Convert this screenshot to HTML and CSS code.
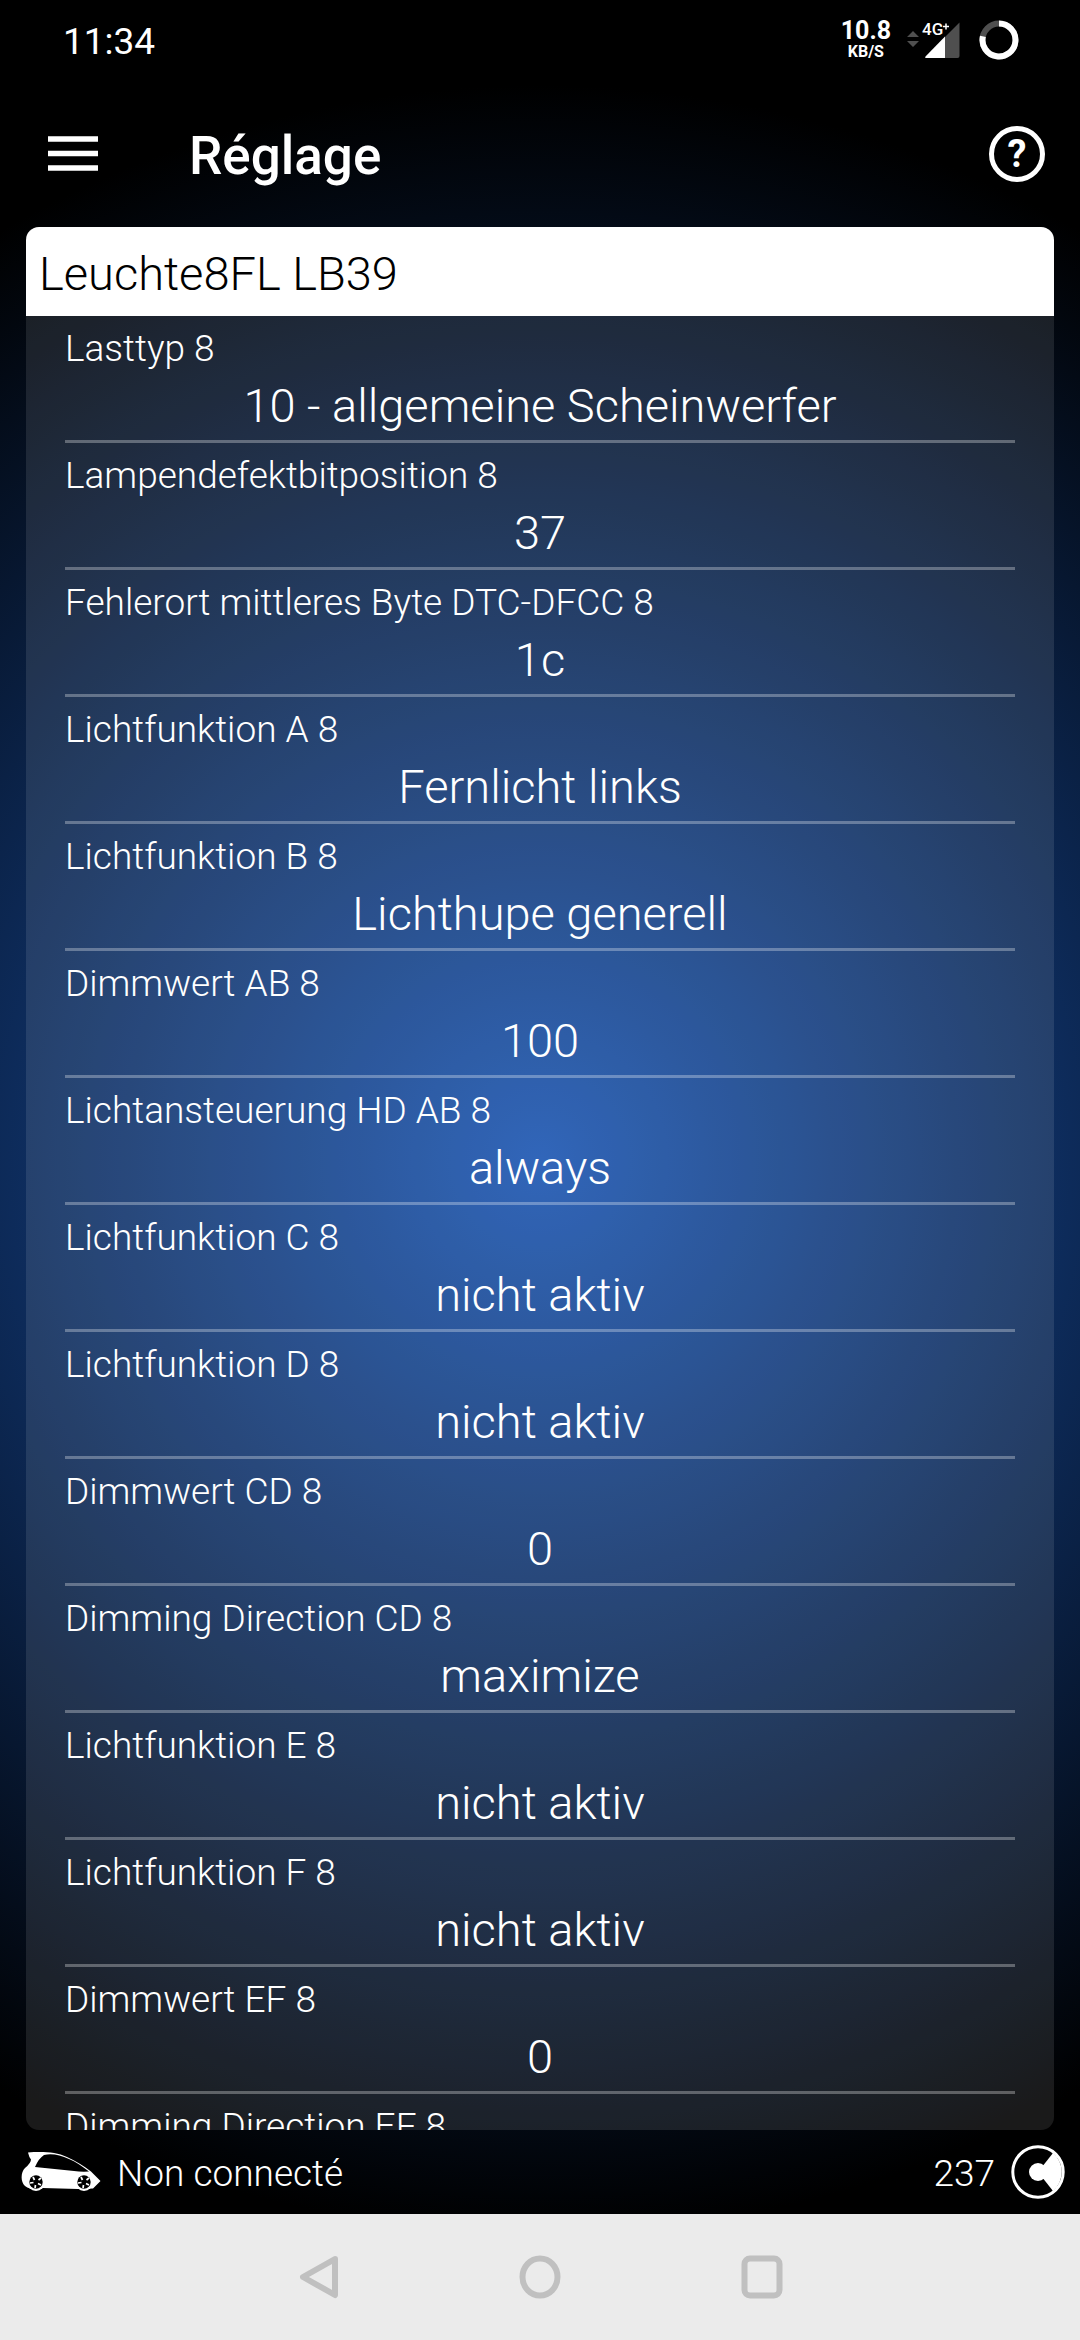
FILE: index.html
```html
<!DOCTYPE html>
<html lang="fr">
<head>
  <meta charset="UTF-8">
  <meta name="viewport" content="width=device-width, initial-scale=1.0">
  <title>Réglage</title>
  <link rel="stylesheet" href="styles.css">
</head>
<body>
  <div class="app">
    <div class="status-bar">
      <span class="clock">11:34</span>
      <div class="speed">
        <span class="speed-value">10.8</span>
        <span class="speed-unit">KB/S</span>
      </div>
      <svg class="signal" width="54" height="38" viewBox="0 0 54 38">
        <path d="M0 16L6 10L12 16Z M0 20L6 26L12 20Z" fill="#4f4f4f"/>
        <path d="M38 16L52.500 1.500V35a2 2 0 0 1-2 2H38Z" fill="#4f4f4f"/>
        <path d="M38 15.500V37H19.500q-2 0-1-1.500Z" fill="#fff"/>
        <text x="15" y="14" class="signal-text">4G</text>
        <path d="M36 5.500h6M39 2.500v6" stroke="#fff" stroke-width="1.500"/>
      </svg>
      <svg class="battery" width="40" height="40" viewBox="0 0 40 40">
        <circle cx="20" cy="20" r="16.500" fill="none" stroke="#4f4f4f" stroke-width="6"/>
        <path d="M20 3.500A16.500 16.500 0 1 1 3.900 16.300" fill="none" stroke="#fff" stroke-width="6"/>
      </svg>
    </div>

    <div class="toolbar">
      <svg class="menu" width="50" height="36" viewBox="0 0 50 36">
        <path d="M0 3h50M0 17.500h50M0 32h50" stroke="#fff" stroke-width="5.500"/>
      </svg>
      <h1 class="title">Réglage</h1>
      <div class="help">?</div>
    </div>

    <div class="card">
      <h2 class="card-title">Leuchte8FL LB39</h2>
      <ul class="settings">
        <li class="setting"><span class="label">Lasttyp 8</span><span class="value">10 - allgemeine Scheinwerfer</span></li>
        <li class="setting"><span class="label">Lampendefektbitposition 8</span><span class="value">37</span></li>
        <li class="setting"><span class="label">Fehlerort mittleres Byte DTC-DFCC 8</span><span class="value">1c</span></li>
        <li class="setting"><span class="label">Lichtfunktion A 8</span><span class="value">Fernlicht links</span></li>
        <li class="setting"><span class="label">Lichtfunktion B 8</span><span class="value">Lichthupe generell</span></li>
        <li class="setting"><span class="label">Dimmwert AB 8</span><span class="value">100</span></li>
        <li class="setting"><span class="label">Lichtansteuerung HD AB 8</span><span class="value">always</span></li>
        <li class="setting"><span class="label">Lichtfunktion C 8</span><span class="value">nicht aktiv</span></li>
        <li class="setting"><span class="label">Lichtfunktion D 8</span><span class="value">nicht aktiv</span></li>
        <li class="setting"><span class="label">Dimmwert CD 8</span><span class="value">0</span></li>
        <li class="setting"><span class="label">Dimming Direction CD 8</span><span class="value">maximize</span></li>
        <li class="setting"><span class="label">Lichtfunktion E 8</span><span class="value">nicht aktiv</span></li>
        <li class="setting"><span class="label">Lichtfunktion F 8</span><span class="value">nicht aktiv</span></li>
        <li class="setting"><span class="label">Dimmwert EF 8</span><span class="value">0</span></li>
        <li class="setting"><span class="label">Dimming Direction EF 8</span></li>
      </ul>
    </div>

    <div class="connection">
      <svg class="car" width="80" height="40" viewBox="0 0 80 40">
        <path d="M7 0.500C22-0.500 35 0 46 5C55 9 63 14 70 19.500L79.500 29L72 36.500L57 37L22 36C16 38 9 38 4 34C-1 29 0 20 4 16Q10 11 10 7.500Q8 5 7 0.500Z" fill="#fff"/>
        <path d="M14 15Q18 6 23 3C36 0 52 7 68 19.500Q60 20 53 19Z" fill="#000"/>
        <circle cx="15" cy="30" r="9" fill="#fff"/>
        <circle cx="63" cy="30" r="9" fill="#fff"/>
        <circle cx="15" cy="30" r="6.700" fill="#000"/>
        <circle cx="63" cy="30" r="6.700" fill="#000"/>
        <path d="M12 25l1.500 3M20 26l-2.500 2M9 31l3.500-.5M20 33l-3-1.500M14 36l.5-3M60 25l1.500 3M68 26l-2.500 2M57 31l3.500-.5M68 33l-3-1.500M62 36l.5-3" stroke="#fff" stroke-width="1.700"/>
      </svg>
      <span class="connection-text">Non connecté</span>
      <span class="credits">237</span>
      <svg class="coin" width="54" height="54" viewBox="0 0 54 54">
        <circle cx="27" cy="27" r="25.200" fill="none" stroke="#fff" stroke-width="3"/>
        <circle cx="27" cy="27" r="9" fill="#fff"/>
        <path d="M27 27L42 8A25 25 0 0 1 42 46Z" fill="#fff"/>
      </svg>
    </div>

    <div class="nav-bar">
      <svg width="40" height="44" viewBox="0 0 40 44">
        <path d="M36 4L4 22L36 40Z" fill="none" stroke="#c0c0c0" stroke-width="6" stroke-linejoin="round"/>
      </svg>
      <svg width="42" height="44" viewBox="0 0 42 44">
        <ellipse cx="21" cy="22" rx="17.500" ry="18.500" fill="none" stroke="#c0c0c0" stroke-width="6"/>
      </svg>
      <svg width="42" height="44" viewBox="0 0 42 44">
        <rect x="3.500" y="3.500" width="35" height="37" rx="5.500" fill="none" stroke="#c0c0c0" stroke-width="6"/>
      </svg>
    </div>
  </div>
</body>
</html>
```
FILE: styles.css
```css
* {
  margin: 0;
  padding: 0;
  box-sizing: border-box;
}
body {
  font-family: Roboto, "Liberation Sans", sans-serif;
  font-weight: 300;
  background-color: #000;
  color: #fff;
}
.app {
  display: flex;
  flex-direction: column;
  width: 1080px;
  height: 2340px;
  overflow: hidden;
  background: radial-gradient(circle 1075px at 540px 1160px, #1a55b2 0%, #000 100%);
}
.status-bar {
  display: flex;
  align-items: center;
  height: 80px;
  padding: 0 61px 0 63px;
}
.clock {
  flex: 1;
  padding-top: 2px;
  font-size: 37px;
  font-weight: 400;
}
.speed {
  display: flex;
  flex-direction: column;
  align-items: center;
  font-weight: 700;
  margin-right: 16px;
}
.speed-value {
  font-size: 25px;
  line-height: 22px;
}
.speed-unit {
  font-size: 16px;
  line-height: 19px;
}
.signal {
  margin-right: 18px;
}
.signal-text {
  font-size: 17px;
  font-weight: 500;
  fill: #fff;
}
.toolbar {
  display: flex;
  align-items: center;
  height: 147px;
  padding: 0 35px 0 48px;
}
.title {
  flex: 1;
  margin-left: 91px;
  padding-top: 4px;
  font-size: 53px;
  font-weight: 500;
}
.help {
  width: 56px;
  height: 56px;
  border: 5px solid #fff;
  border-radius: 50%;
  font-size: 38px;
  font-weight: 700;
  line-height: 46px;
  text-align: center;
}
.card {
  height: 1903px;
  margin: 0 26px;
  border-radius: 13px;
  background-color: rgba(255, 255, 255, 0.1);
  overflow: hidden;
}
.card-title {
  height: 89px;
  padding-left: 13px;
  background-color: #fff;
  color: #000;
  font-size: 47px;
  font-weight: 300;
  line-height: 93px;
}
.settings {
  list-style: none;
  padding: 0 39px;
}
.setting {
  display: flex;
  flex-direction: column;
  height: 127px;
  padding-top: 8px;
  border-bottom: 3px solid rgba(255, 255, 255, 0.3);
}
.label {
  font-size: 37px;
  line-height: 50px;
}
.value {
  font-size: 47px;
  line-height: 63px;
  text-align: center;
}
.connection {
  display: flex;
  align-items: center;
  height: 84px;
  padding: 0 15px 0 21px;
}
.connection-text {
  flex: 1;
  margin-left: 16px;
  padding-top: 2px;
  font-size: 37px;
}
.credits {
  margin-right: 16px;
  padding-top: 2px;
  font-size: 37px;
}
.nav-bar {
  display: flex;
  justify-content: space-between;
  align-items: center;
  height: 126px;
  padding: 0 297px 0 299px;
  background-color: #ebebeb;
}
```
